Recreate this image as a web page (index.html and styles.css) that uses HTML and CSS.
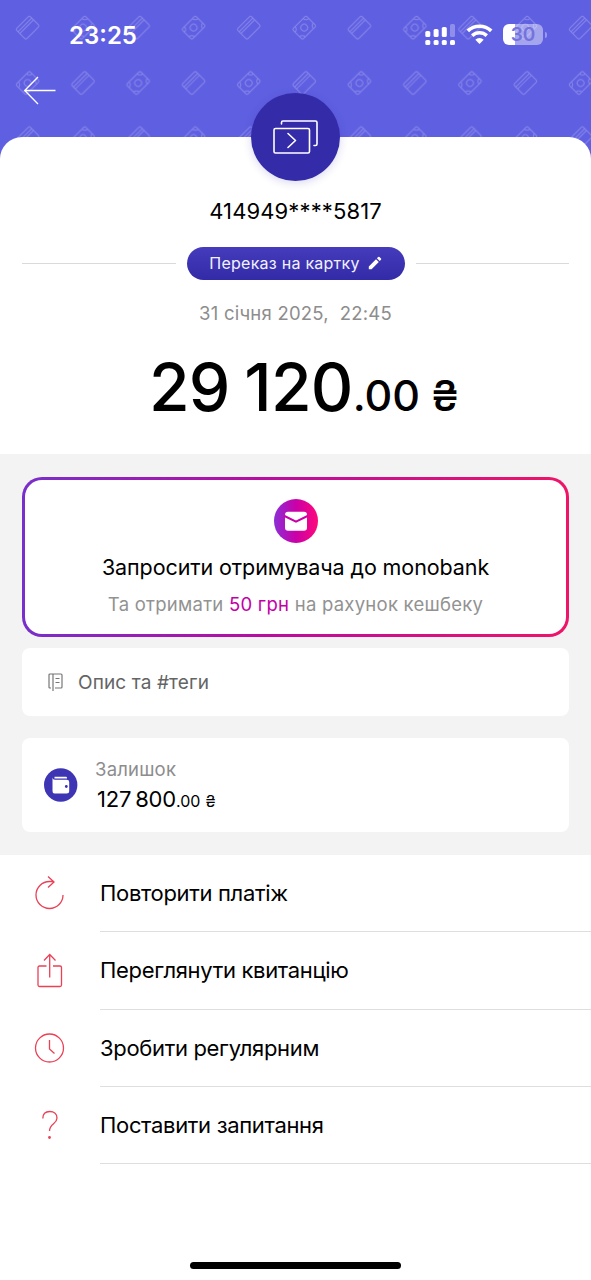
FILE: index.html
```html
<!DOCTYPE html>
<html lang="uk">
<head>
<meta charset="utf-8">
<title>monobank</title>
<link rel="stylesheet" href="styles.css">
</head>
<body>
<header class="hero">
  <svg class="hero-pattern" width="591" height="170">
    <defs>
      <g id="note" fill="none" stroke="#8786ea" stroke-width="1">
        <g transform="rotate(-45)">
          <rect x="-9.7" y="-7.2" width="19.4" height="14.4" rx="1.6"/>
          <circle r="3.4"/>
          <path d="M-9.7-3.2A4 4 0 0 0-5.7-7.2M9.7-3.2A4 4 0 0 1 5.7-7.2M-9.7 3.2A4 4 0 0 1-5.7 7.2M9.7 3.2A4 4 0 0 0 5.7 7.2"/>
        </g>
      </g>
      <g id="card" fill="none" stroke="#8786ea" stroke-width="1">
        <g transform="rotate(-45)">
          <rect x="-9.7" y="-7.2" width="19.4" height="14.4" rx="1.6"/>
          <path d="M-9.7-3.9H9.7M-9.7-1.3H9.7"/>
        </g>
      </g>
      <pattern id="money" width="110.6" height="110.6" patternUnits="userSpaceOnUse">
        <use href="#card" x="27.6" y="27.6"/>
        <use href="#note" x="83" y="27.6"/>
        <use href="#note" x="27.6" y="83"/>
        <use href="#card" x="83" y="83"/>
      </pattern>
    </defs>
    <rect width="591" height="170" fill="url(#money)"/>
  </svg>
  <div class="status">
    <span class="clock">23:25</span>
    <div class="status-icons">
      <svg width="31" height="22" viewBox="0 0 31 22" fill="#fff">
        <rect x="0.3" y="7" width="5" height="6" rx="1.6"/><rect x="8.6" y="5" width="5" height="8" rx="1.6"/><rect x="16.8" y="3" width="5" height="10" rx="1.6"/><rect x="25" y="0" width="5" height="13" rx="1.6" opacity=".3"/>
        <rect x="0.3" y="16" width="5" height="5" rx="1.6"/><rect x="8.6" y="16" width="5" height="5" rx="1.6"/><rect x="16.8" y="16" width="5" height="5" rx="1.6"/><rect x="25" y="16" width="5" height="5" rx="1.6"/>
      </svg>
      <svg class="wifi" width="27" height="20" viewBox="0 0 27 20" fill="none" stroke="#fff">
        <path d="M1.8 6.9A17 17 0 0 1 25.2 6.9" stroke-width="3.7"/>
        <path d="M6.2 11.6A10.7 10.7 0 0 1 20.8 11.6" stroke-width="3.5"/>
        <path d="M13.5 20L9.3 15.7A6.2 6.2 0 0 1 17.7 15.7Z" fill="#fff" stroke="none"/>
      </svg>
      <div class="battery"><span>30</span></div>
      <i class="battery-tip"></i>
    </div>
  </div>
  <svg class="back" width="34" height="30" viewBox="0 0 34 30" fill="none" stroke="#fff" stroke-width="1.3"><path d="M32.5 15.5H2M15 2L1.7 15.500L15 29"/></svg>
</header>
<main class="sheet">
  <div class="badge">
    <svg width="46" height="36" viewBox="0 0 46 36" fill="none" stroke="#fff" stroke-width="1.6" stroke-linecap="round" stroke-linejoin="round">
      <rect x="1" y="9.500" width="35.500" height="24.500" rx="1.500"/><path d="M8.500 5V3.500Q8.500 2 10 2H42.500Q44 2 44 3.500V25Q44 26.500 42.500 26.500H41M15 14.500L22.500 21.500L15 28.500"/>
    </svg>
  </div>
  <section class="summary">
    <div class="pan"><span>414949****5817</span></div>
    <div class="category">
      <i></i>
      <div class="pill"><span>Переказ на картку</span><svg width="14" height="14" viewBox="0 0 14 14" fill="#fff"><path d="M.8 13.200V10.400L8 3.200L10.800 6L3.600 13.200ZM8.900 2.300L10.200 1Q10.900.5 11.500 1L13 2.500Q13.500 3.100 13 3.800L11.700 5.100Z"/></svg></div>
      <i></i>
    </div>
    <div class="date"><span>31 січня 2025,&nbsp; 22:45</span></div>
    <div class="amount"><b>29 120</b><span class="cents">.00</span><span class="hryvnia">₴</span></div>
  </section>
  <section class="cards">
    <div class="invite">
      <svg width="44" height="44" viewBox="0 0 44 44">
        <defs><linearGradient id="pink"><stop offset="0" stop-color="#8b2ed6"/><stop offset=".5" stop-color="#ca00a8"/><stop offset="1" stop-color="#ff087a"/></linearGradient></defs>
        <circle cx="22" cy="22" r="22" fill="url(#pink)"/>
        <rect x="11" y="12.700" width="22" height="19" rx="3" fill="#fff"/>
        <path d="M10.500 17L22 22.700L33.500 17" fill="none" stroke="#c800a7" stroke-width="2"/>
      </svg>
      <div class="invite-title"><span>Запросити отримувача до monobank</span></div>
      <div class="invite-sub"><span>Та отримати <em>50 грн</em> на рахунок кешбеку</span></div>
    </div>
    <div class="note-field">
      <svg width="16" height="20" viewBox="0 0 16 20" fill="none" stroke="#777" stroke-width="1.200"><path d="M3 16H2Q1 16 1 15V3Q1 2 2 2H13Q14 2 14 3V15Q14 16 13 16H7M5 2V19M7.500 6.500H11.500M7.500 10.500H11.500"/></svg>
      <span>Опис та #теги</span>
    </div>
    <div class="balance">
      <svg width="34" height="34" viewBox="0 0 34 34"><circle cx="16.700" cy="17" r="16.700" fill="#3d35b3"/><path d="M10.500 8.800H22Q23 8.800 23 10V10.500H10.500M8.500 9.500V23Q8.500 25.500 10.500 25.500H22.500Q25.200 25.500 25.200 23V14Q25.200 11.700 22.700 11.700H11Q8.500 11.700 8.500 9.500" fill="#fff"/><circle cx="22.300" cy="18.500" r="1.400" fill="#3d35b3"/></svg>
      <div class="balance-text"><div class="balance-label"><span>Залишок</span></div><div class="balance-sum"><span class="whole">127 800</span><span class="part">.00</span><span class="uah">₴</span></div></div>
    </div>
  </section>
  <nav class="actions">
    <a><svg width="34" height="36" viewBox="0 0 34 36"><path d="M31 19A13.500 13.500 0 1 1 17.500 5.500H22M16 .5L22 6L16 11.500"/></svg><span>Повторити платіж</span></a>
    <a><svg width="34" height="36" viewBox="0 0 34 36"><path d="M14.500 13H7.500Q6 13 6 14.500V32Q6 33.500 7.500 33.500H28Q29.500 33.500 29.500 32V14.500Q29.500 13 28 13H21M17.700 24.500V1.500M12 7.500L17.700 1.500L23.500 7.500"/></svg><span>Переглянути квитанцію</span></a>
    <a><svg width="34" height="36" viewBox="0 0 34 36"><path d="M31.500 18A14 14 0 1 1 3.500 18A14 14 0 1 1 31.500 18M17.500 10V19L22.500 23.500"/></svg><span>Зробити регулярним</span></a>
    <a><svg width="34" height="36" viewBox="0 0 34 36"><path d="M10.800 11.500C10.800 7 13.200 4.500 17.700 4.500C22.200 4.500 25 7.200 25 11C25 17 17.500 16.500 17.500 24"/><circle cx="17.500" cy="30.500" r="1.400"/></svg><span>Поставити запитання</span></a>
  </nav>
</main>
<footer class="home"></footer>
</body>
</html>
```
FILE: styles.css
```css
* { box-sizing: border-box; }
body { margin: 0; width: 591px; height: 1280px; overflow: hidden; background: #fff; color: #000; font-family: Inter, "Liberation Sans", sans-serif; display: flex; flex-direction: column; }
span { white-space: nowrap; }
svg { display: block; flex: none; }
.hero { position: relative; height: 170px; flex: none; background: #5f5fe1; }
.hero-pattern { position: absolute; inset: 0; }
.status { position: relative; display: flex; justify-content: space-between; height: 70px; padding: 0 44px 0 69px; color: #fff; }
.clock { font-size: 24px; font-weight: 600; line-height: 72px; }
.status-icons { display: flex; align-items: flex-start; padding-top: 24px; }
.wifi { margin-left: 10px; }
.battery { width: 40px; height: 21px; margin-left: 10px; border-radius: 6px; background: linear-gradient(90deg, #fff 12px, #ffffff70 12px); color: #7472dc; font-size: 19px; font-weight: 600; line-height: 22px; text-align: center; }
.battery-tip { width: 2px; height: 6px; margin: 8px 0 0 2px; border-radius: 0 2px 2px 0; background: #9a99ec; }
.back { position: relative; margin: 5px 0 0 23px; }
.sheet { position: relative; margin-top: -33px; background: #fff; border-radius: 22px 22px 0 0; }
.badge { position: absolute; left: 251px; top: -44px; width: 89px; height: 88px; border-radius: 50%; background: #342ba8; box-shadow: 0 2px 8px #2d28a52e; display: grid; place-items: center; }
.summary { height: 317px; padding-top: 59px; text-align: center; }
.pan { height: 30px; line-height: 30px; font-size: 22px; letter-spacing: .12px; }
.category { display: flex; align-items: center; gap: 11px; margin: 21px 22px 0; }
.category > i { flex: 1; height: 1px; background: #dadadb; }
.pill { width: 218px; height: 33px; padding-bottom: 1px; border-radius: 17px; background: linear-gradient(#443cbc, #322aa6); display: flex; align-items: center; justify-content: center; gap: 8px; color: #f2f1ff; font-size: 16px; letter-spacing: .25px; }
.date { margin-top: 18px; height: 30px; line-height: 30px; font-size: 18.500px; letter-spacing: .23px; color: #8d8d8d; }
.amount { display: flex; justify-content: center; align-items: baseline; margin-top: 19px; padding-left: 17px; line-height: 80px; }
.amount b { font-size: 66px; font-weight: 500; letter-spacing: -.8px; word-spacing: -2px; }
.cents { font-size: 43px; font-weight: 450; }
.hryvnia { font-size: 42px; font-weight: 450; margin-left: 11px; }
.cards { background: #f3f3f3; height: 401px; padding: 23px 22px; }
.invite { height: 160px; border: 3px solid transparent; border-radius: 20px; background: linear-gradient(#fff, #fff) padding-box, linear-gradient(90deg, #782fcb, #bb0ba0 45%, #ef1467) border-box; display: flex; flex-direction: column; align-items: center; padding-top: 18.500px; }
.invite-title { margin-top: 9.500px; height: 30px; line-height: 30px; font-size: 21.500px; letter-spacing: -.1px; }
.invite-sub { margin-top: 7px; height: 30px; line-height: 30px; font-size: 18.500px; letter-spacing: .25px; color: #929292; }
.invite-sub em { font-style: normal; color: #c300a6; }
.note-field { margin-top: 11px; height: 68px; border-radius: 8px; background: #fff; display: flex; align-items: center; gap: 14px; padding-left: 26px; font-size: 19px; letter-spacing: .12px; color: #646464; }
.balance { margin-top: 22px; height: 94px; border-radius: 8px; background: #fff; display: flex; align-items: center; gap: 17px; padding-left: 22px; }
.balance-text { padding-bottom: 2px; }
.balance-label { height: 30px; line-height: 30px; font-size: 18.500px; letter-spacing: .2px; color: #8d8d8d; }
.balance-sum { display: flex; align-items: baseline; height: 30px; line-height: 30px; padding-left: 2px; }
.whole { font-size: 22px; letter-spacing: -.2px; word-spacing: -2px; }
.part, .uah { font-size: 16px; }
.uah { margin-left: 5px; }
.actions a { display: flex; align-items: center; height: 77.250px; padding-left: 32px; gap: 34px; font-size: 22px; letter-spacing: -.33px; }
.actions svg { fill: none; stroke: #eb4056; stroke-width: 1.300; }
.actions circle { fill: #eb4056; stroke: none; }
.actions a > span { flex: 1; line-height: 77.400px; height: 77.250px; border-bottom: 1px solid #dedede; }
.home { width: 211px; height: 7px; margin: auto auto 11px; border-radius: 4px; background: #000; }
```
